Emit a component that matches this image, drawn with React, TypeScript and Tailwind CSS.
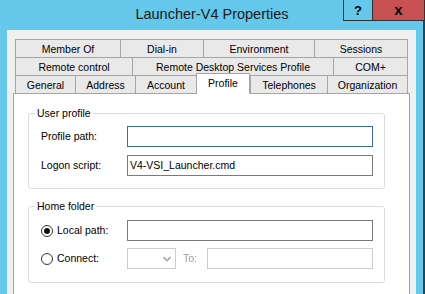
import React from "react";

const row1 = [
  { t: "Member Of", c: "w-[105px] border-l" },
  { t: "Dial-in", c: "w-[83px] border-l" },
  { t: "Environment", c: "w-[111px] border-l" },
  { t: "Sessions", c: "w-[94px] border-l border-r" },
];
const row2 = [
  { t: "Remote control", c: "w-[117px] border-l" },
  { t: "Remote Desktop Services Profile", c: "w-[201px] border-l" },
  { t: "COM+", c: "w-[75px] border-l border-r" },
];
const row3 = [
  { t: "General", c: "w-[60px] border-l" },
  { t: "Address", c: "w-[60px] border-l" },
  { t: "Account", c: "w-[61px] border-l" },
  { t: "Profile", c: "w-[54px] border-l", sel: true },
  { t: "Telephones", c: "w-[77px] border-l" },
  { t: "Organization", c: "w-[81px] border-l border-r" },
];

function TabRow({ tabs }: { tabs: { t: string; c: string; sel?: boolean }[] }) {
  return (
    <div className="flex h-[18px] shrink-0">
      {tabs.map((tab) =>
        tab.sel ? (
          <div
            key={tab.t}
            className={`${tab.c} relative z-10 mt-[-2px] h-[21px] border-t border-r border-[#A5A5A5] bg-white flex items-start justify-center pt-[2px] leading-[14px]`}
          >
            {tab.t}
          </div>
        ) : (
          <div
            key={tab.t}
            className={`${tab.c} h-[18px] border-t border-[#A5A5A5] bg-[#E9E9E9] flex items-center justify-center leading-[14px]`}
          >
            {tab.t}
          </div>
        )
      )}
    </div>
  );
}

function Radio({ checked }: { checked?: boolean }) {
  return (
    <div className="w-[12px] h-[12px] rounded-full border border-[#333333] bg-white flex items-center justify-center shrink-0">
      {checked && <div className="w-[6px] h-[6px] rounded-full bg-[#111111]" />}
    </div>
  );
}

export default function App() {
  return (
    <div
      className="w-[425px] h-[294px] overflow-hidden flex items-start bg-[#64C8EA] text-[10.5px] text-black relative"
      style={{ fontFamily: '"Liberation Sans", Arial, sans-serif' }}
    >
      <div className="w-[423px] flex flex-col shrink-0">
        <div className="h-[30px] shrink-0 flex items-center justify-center text-[14.5px] text-[#1a1a1a] pl-[1px]">
          Launcher-V4 Properties
        </div>
        <div className="flex shrink-0">
          <div className="w-[7px]" />
          <div className="w-[409px] bg-[#F0F0F0] pt-[9px]">
            <div className="ml-[8px]">
              <TabRow tabs={row1} />
              <TabRow tabs={row2} />
              <TabRow tabs={row3} />
            </div>
            <div className="ml-[6px] w-[397px] h-[240px] border border-[#A5A5A5] bg-white">
              <fieldset className="ml-[14px] mt-[12px] w-[357px] border border-[#DCDCDC] rounded-[3px] pb-[12px]">
                <legend className="ml-[6px] px-[2px] leading-[14px]">User profile</legend>
                <div className="flex items-center h-[21px] mt-[6px]">
                  <div className="w-[98px] pl-[12px]">Profile path:</div>
                  <div className="w-[246px] h-[21px] border border-[#3C6D96] bg-white" />
                </div>
                <div className="flex items-center h-[21px] mt-[8px]">
                  <div className="w-[98px] pl-[12px]">Logon script:</div>
                  <div className="w-[246px] h-[21px] border border-[#7A7A7A] bg-white flex items-center pl-[2px]">
                    V4-VSI_Launcher.cmd
                  </div>
                </div>
              </fieldset>
              <fieldset className="ml-[14px] mt-[10px] w-[357px] border border-[#DCDCDC] rounded-[3px] pb-[13px]">
                <legend className="ml-[6px] px-[2px] leading-[14px]">Home folder</legend>
                <div className="flex items-center h-[21px] mt-[7px]">
                  <div className="w-[98px] pl-[12px] flex items-center">
                    <Radio checked />
                    <span className="ml-[4px]">Local path:</span>
                  </div>
                  <div className="w-[246px] h-[21px] border border-[#7A7A7A] bg-white" />
                </div>
                <div className="flex items-center h-[21px] mt-[7px]">
                  <div className="w-[98px] pl-[12px] flex items-center">
                    <Radio />
                    <span className="ml-[4px]">Connect:</span>
                  </div>
                  <div className="w-[49px] h-[21px] border border-[#CCCCCC] bg-white flex items-center justify-end pr-[4px]">
                    <svg width="8" height="6" viewBox="0 0 8 6">
                      <path d="M0.5 1 L4 4.5 L7.5 1" fill="none" stroke="#A8A8A8" strokeWidth="1.6" />
                    </svg>
                  </div>
                  <div className="w-[31px] pl-[7px] text-[#A0A0A0]">To:</div>
                  <div className="w-[166px] h-[21px] border border-[#CCCCCC] bg-white" />
                </div>
              </fieldset>
            </div>
          </div>
          <div className="w-[7px]" />
        </div>
      </div>
      <div className="w-[2px] h-[294px] bg-[#3A3F44] shrink-0" />
      <div className="absolute top-0 left-[343px] flex">
        <div className="w-[30px] h-[21px] border-l border-b border-r border-[#2E3338] bg-[#64C8EA] flex items-center justify-center font-bold text-[13px] leading-none">
          ?
        </div>
        <div className="w-[52px] h-[21px] border-b border-r border-[#2E3338] bg-[#C75050] flex items-center justify-center font-bold text-[15px] leading-none pb-[2px]">
          x
        </div>
      </div>
    </div>
  );
}
